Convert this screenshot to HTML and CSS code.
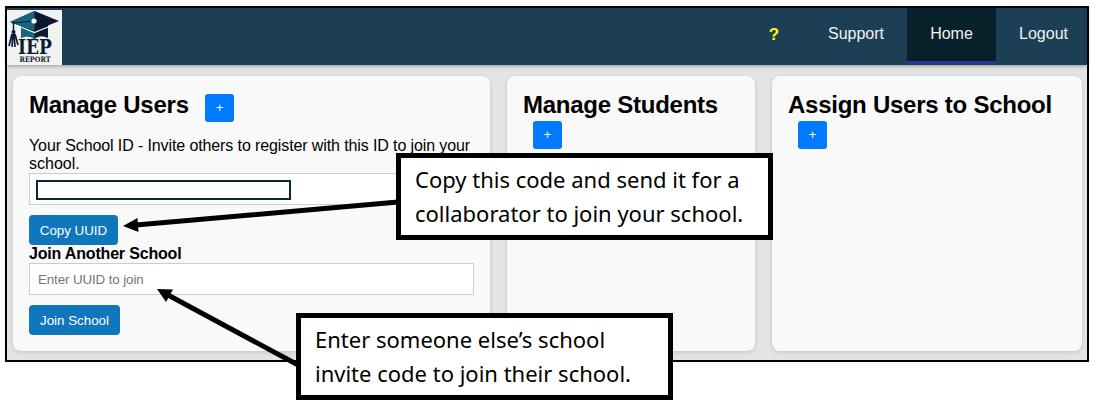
FILE: index.html
```html
<!DOCTYPE html>
<html lang="en">
<head>
<meta charset="utf-8">
<title>IEP Report</title>
<link rel="stylesheet" href="styles.css">
</head>
<body>
<div class="app">
  <header class="nav">
    <svg class="logo" viewBox="0 0 55 55" width="55" height="55">
      <rect width="55" height="55" fill="#f1f2f2"/>
      <path d="M14 15 L27 11 L41 15 V28 Q33 24 27.500 29 Q21 24 14 28Z" fill="#0b1c33"/>
      <path d="M14 16 L27.500 22 V29 Q21 24 14 28Z" fill="#176580"/>
      <path d="M14 17 L27.500 22.500 L41 17" stroke="#f1f2f2" stroke-width="1.300" fill="none"/>
      <path d="M27.500 1 L52 11 L27.500 21 L3 12Z" fill="#0b1730"/>
      <path d="M27.500 1 V21 L3 12Z" fill="#176580"/>
      <path d="M5 13 L27 11" stroke="#0b1c33" fill="none"/>
      <circle cx="27" cy="11" r="2.600" fill="#f5f5f5"/>
      <path d="M6.500 12 V24" stroke="#0b1c33" stroke-width="1.500"/>
      <circle cx="6.500" cy="22" r="2" fill="#0b1c33"/>
      <path d="M5 24 L2 36 M6 24 L5 37 M7 24 L8 37 M8 24 L11 35" stroke="#0b1c33" stroke-width="1.700"/>
      <text class="logo-name" x="11" y="43.500" textLength="34" lengthAdjust="spacingAndGlyphs">IEP</text>
      <text class="logo-sub" x="12.500" y="51.500" textLength="31" lengthAdjust="spacingAndGlyphs">REPORT</text>
    </svg>
    <nav class="links">
      <a class="link help">?</a>
      <a class="link support">Support</a>
      <a class="link active">Home</a>
      <a class="link logout">Logout</a>
    </nav>
  </header>
  <main class="cards">
    <section class="card">
      <h2 class="title">Manage Users <button class="add">+</button></h2>
      <p class="text"><span class="invite">Your School ID - Invite others to register with this ID to join your</span><br>school.</p>
      <div class="field"><div class="code"></div></div>
      <button class="btn copy">Copy UUID</button>
      <h3 class="subtitle">Join Another School</h3>
      <div class="field placeholder">Enter UUID to join</div>
      <button class="btn join">Join School</button>
    </section>
    <section class="card">
      <h2 class="title">Manage Students <button class="add">+</button></h2>
    </section>
    <section class="card">
      <h2 class="title">Assign Users to School <button class="add">+</button></h2>
    </section>
  </main>
</div>
<svg class="arrows" width="1098" height="403" viewBox="0 0 1098 403">
  <path d="M398 202 L136 225 M300 366 L168 295" stroke="#000" stroke-width="5"/>
  <path d="M123 226 L137.500 218 L138.500 232Z M157 289 L173 289.500 L166 302Z"/>
</svg>
<div class="callout callout-copy"><span>Copy this code and send it for a</span><span>collaborator to join your school.</span></div>
<div class="callout callout-enter"><span>Enter someone else’s school</span><span>invite code to join their school.</span></div>
</body>
</html>
```
FILE: styles.css
```css
* { box-sizing: border-box; }
body {
  margin: 0;
  padding: 6px 0 0 5px;
  height: 403px;
  overflow: hidden;
  background: #fff;
  font-family: "Liberation Sans", Arial, sans-serif;
  color: #000;
}
.app {
  width: 1084px;
  height: 356px;
  border: 2px solid #000;
  background: #e4e4e4;
}
.nav {
  display: flex;
  justify-content: space-between;
  height: 57px;
  background: #1c3f56;
  box-shadow: 0 1px 4px rgba(0, 0, 0, .35);
}
.logo { display: block; margin-top: 2px; }
.logo-name { font: bold 20px "DejaVu Serif", serif; fill: #0b1c33; }
.logo-sub { font: bold 7.500px "DejaVu Serif", serif; fill: #0b1c33; }
.links { display: flex; }
.link {
  height: 56px;
  padding-top: 17px;
  font-size: 16px;
  line-height: 18px;
  text-align: center;
  color: #f2f2f2;
}
.help { width: 54px; padding-top: 18px; color: #ff0; font-weight: bold; font-size: 17px; }
.support { width: 106px; padding-left: 4px; }
.active { width: 89px; background: #07212b; border-bottom: 3px solid #2d368c; }
.logout { width: 91px; padding-left: 4px; }
.cards {
  display: grid;
  grid-template-columns: 477px 248px 310px;
  column-gap: 17px;
  height: 286px;
  padding: 11px 0 0 6px;
}
.card {
  height: 275px;
  padding: 16px;
  border-radius: 8px;
  background: #f9f9f9;
  box-shadow: 0 2px 5px rgba(0, 0, 0, .1), 0 0 2px #c9d3df;
}
.title { margin: -1px 0 0; font-size: 24px; line-height: 27px; height: 46px; letter-spacing: -.25px; }
.add {
  width: 29px;
  height: 28px;
  margin: 0 0 0 10px;
  padding: 0;
  border: 0;
  border-radius: 3px;
  background: #007bff;
  color: #fff;
  font: 13.333px "Liberation Sans", Arial, sans-serif;
  vertical-align: middle;
  position: relative;
  top: 1px;
}
.text { margin: 0; font-size: 16px; line-height: 18px; height: 36px; white-space: nowrap; }
.invite { letter-spacing: -.11px; }
.field {
  display: flex;
  align-items: center;
  width: 445px;
  height: 32px;
  padding-left: 6px;
  border: 1px solid #ccc;
  background: #fff;
}
.code { width: 255px; height: 20px; border: 2px solid #0b2535; margin-top: 2px; }
.placeholder { padding-left: 8px; font-size: 13.333px; letter-spacing: -.1px; color: #757575; }
.btn {
  display: block;
  height: 30px;
  margin: 10px 0 0;
  padding: 0;
  border: 0;
  border-radius: 4px;
  background: #1077bd;
  color: #fff;
  font: 13.333px "Liberation Sans", Arial, sans-serif;
}
.copy { width: 89px; }
.join { width: 91px; }
.subtitle { margin: 0; font-size: 16px; line-height: 18px; letter-spacing: -.18px; }
.arrows { position: absolute; left: 0; top: 0; }
.callout {
  position: absolute;
  width: 377px;
  height: 87px;
  padding: 4px 0 0 14px;
  border: 5px solid #000;
  background: #fff;
  font: 22px/34px "Noto Sans", sans-serif;
  white-space: nowrap;
}
.callout span { display: block; width: max-content; }
.callout-copy { left: 396px; top: 153px; }
.callout-enter { left: 296px; top: 313px; }
```
